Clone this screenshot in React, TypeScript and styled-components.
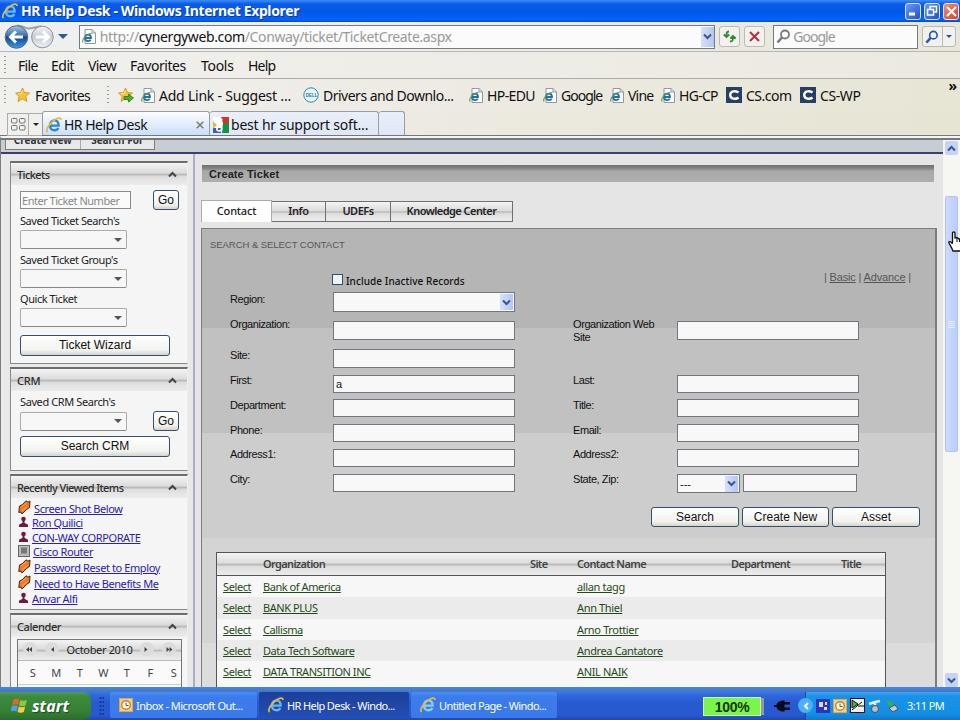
import React from 'react'
import styled, { createGlobalStyle, css } from 'styled-components'

const tahoma = `'Noto Sans', 'Open Sans', 'DejaVu Sans', sans-serif`
const arial = `'Liberation Sans', Arial, sans-serif`

const GlobalStyle = createGlobalStyle`
  * { box-sizing: border-box; }
  body { margin: 0; overflow: hidden; font-family: ${tahoma}; }
`

/* ---------- icons ---------- */

const IeLogo = ({ color = '#2a86cf' }: { color?: string }) => (
  <svg width="16" height="16" viewBox="0 0 16 16" fill="none">
    <path d="M4.6 8.6H12.6C12.8 5.4 10.9 3.4 8.5 3.4C5.9 3.4 4 5.5 4 8.4C4 11.2 5.8 13.2 8.5 13.2C10.3 13.2 11.6 12.4 12.3 10.9" stroke={color} strokeWidth="2.4" />
    <path d="M5.5 5.5C6.3 4.1 7.2 3.5 8.7 3.5" stroke="#7cc6f0" strokeWidth="1" />
    <path d="M1.6 15C-.8 13.2 3.3 6.1 8.6 2.9C11.7 .9 15.3 .2 15 3" stroke="#e9b83b" strokeWidth="1.7" />
  </svg>
)

const PageIcon = () => (
  <svg width="14" height="15" viewBox="0 0 14 15" fill="none">
    <path d="M3 .5H10L13.5 4V14.5H3Z" fill="#fdfdfd" stroke="#8f98a4" />
    <path d="M10 .5V4H13.5" stroke="#8f98a4" />
    <path d="M3.2 9H9C9 6.7 7.8 5.6 6.1 5.6C4.2 5.6 3.1 7 3.1 9C3.1 11 4.2 12.2 6.1 12.2C7.4 12.2 8.3 11.6 8.7 10.6" stroke="#23719f" strokeWidth="1.8" />
    <path d="M1 13.5C-.5 11 4 5 9.5 4.2" stroke="#5f9a58" strokeWidth="1.1" />
  </svg>
)

const Star = ({ add }: { add?: boolean }) => (
  <svg width="16" height="16" viewBox="0 0 16 16">
    <path d="M7.5 1L9.5 5.5L14.5 6L10.8 9.4L12 14.4L7.5 11.8L3 14.4L4.1 9.4L.6 6L5.5 5.5Z" fill="#fbc12e" stroke="#c98c1e" strokeWidth=".8" />
    <path d="M7.5 3L6.4 6.5L3 7" stroke="#ffe993" fill="none" />
    {add && <path d="M6 9.5H10.5V7L15.5 11L10.5 15V12.5H6Z" fill="#48b336" stroke="#267a1f" strokeWidth=".8" />}
  </svg>
)

const DellIcon = () => (
  <svg width="16" height="16" viewBox="0 0 16 16">
    <circle cx="8" cy="8" r="7.2" fill="#e9f4f9" stroke="#2d8db8" />
    <text x="2.7" y="10" fontFamily="Liberation Sans" fontSize="4.5" fontWeight="bold" fill="#16789f">DELL</text>
  </svg>
)

const CsIcon = () => (
  <svg width="16" height="16" viewBox="0 0 16 16">
    <rect width="16" height="16" fill="#263f69" />
    <path d="M12.5 5.5C10 3.4 4.2 3.8 4.2 8C4.2 12.2 10 12.6 12.5 10.5" fill="none" stroke="#fff" strokeWidth="2.4" />
  </svg>
)

const GoogleIcon = () => (
  <svg width="16" height="16" viewBox="0 0 16 16">
    <rect width="16" height="16" fill="#fff" />
    <path d="M8 0H16V6H10Z" fill="#d9322d" />
    <path d="M10 6H16V16H9Z" fill="#15923f" />
    <path d="M0 4L4 8L0 12Z" fill="#f0b92b" />
    <path d="M0 11H8V16H0Z" fill="#2f63c4" />
    <path d="M9.5 2.5H6C3.5 2.5 3.5 7 6 7.2C8.5 7.2 8 3.5 6.5 2.7M5.5 7.5L8 10C9.5 12 8.5 14 6 14C3.5 14 3 11.5 5 10.5" fill="none" stroke="#fff" strokeWidth="1.7" />
  </svg>
)

const Chevron = ({ up, color = '#3b5687' }: { up?: boolean; color?: string }) => (
  <svg width="9" height="7" viewBox="0 0 9 7">
    <path d={up ? 'M1 5.5L4.5 2L8 5.5' : 'M1 1.5L4.5 5L8 1.5'} fill="none" stroke={color} strokeWidth="2" />
  </svg>
)

const Caret = ({ color = '#222', size = 6 }: { color?: string; size?: number }) => (
  <svg width={size} height={size / 2} viewBox="0 0 6 3"><path d="M0 0H6L3 3Z" fill={color} /></svg>
)

const Magnifier = ({ color, size = 15 }: { color: string; size?: number }) => (
  <svg width={size} height={size} viewBox="0 0 15 15" fill="none" stroke={color}>
    <circle cx="9" cy="5.5" r="4" strokeWidth="1.8" />
    <path d="M6 8.5L1.5 13.5" strokeWidth="2.6" />
  </svg>
)

const NavButtons = () => (
  <svg width="50" height="28" viewBox="0 0 50 28">
    <defs>
      <linearGradient id="back" x2="0" y2="1">
        <stop stopColor="#a9c3df" /><stop offset=".45" stopColor="#3a6eb2" /><stop offset=".5" stopColor="#0d4799" /><stop offset="1" stopColor="#3d9ae6" />
      </linearGradient>
      <linearGradient id="fwd" x2="0" y2="1">
        <stop stopColor="#f3f5f6" /><stop offset=".5" stopColor="#c7ced4" /><stop offset="1" stopColor="#eef2f5" />
      </linearGradient>
    </defs>
    <path d="M13 2.5C19 2.5 21 5.5 25 5.5C29 5.5 31 3.5 38 3.5" fill="none" stroke="#9ea4aa" strokeWidth="2" />
    <circle cx="12.5" cy="14" r="11.3" fill="url(#back)" stroke="#56697f" />
    <path d="M19 14H7M12 8.5L6.5 14L12 19.5" stroke="#fff" strokeWidth="3" fill="none" />
    <circle cx="38.5" cy="14" r="10.8" fill="url(#fwd)" stroke="#8b9299" />
    <path d="M32 14H44M39 8.5L44.5 14L39 19.5" stroke="#fff" strokeWidth="3" fill="none" />
  </svg>
)

const RefreshIcon = () => (
  <svg width="15" height="13" viewBox="0 0 15 13" fill="none" stroke="#2f8a30" strokeWidth="1.8">
    <path d="M7 1.5C4.5 1.5 4.5 3 4.5 6.5M1.8 4.5L4.5 7L7.2 4.5" />
    <path d="M8 11.5C10.8 11.5 11 10 11 6.5M8.3 8.5L11 6L13.7 8.5" />
  </svg>
)

const CrossIcon = ({ color, size = 11 }: { color: string; size?: number }) => (
  <svg width={size} height={size} viewBox="0 0 11 11">
    <path d="M1 1L10 10M10 1L1 10" stroke={color} strokeWidth="2" />
  </svg>
)

const QuickTabsIcon = () => (
  <svg width="15" height="13" viewBox="0 0 15 13" fill="none" stroke="#74787d">
    <rect x=".5" y=".5" width="5.5" height="4.5" rx="1" /><rect x="8.5" y=".5" width="5.5" height="4.5" rx="1" />
    <rect x=".5" y="7.5" width="5.5" height="4.5" rx="1" /><rect x="8.5" y="7.5" width="5.5" height="4.5" rx="1" />
  </svg>
)

const TicketIcon = () => (
  <svg width="13" height="15" viewBox="0 0 13 15">
    <path d="M1.5 6L4.5 4.5L8 .8L10 2.2L12 1L11.5 7.5L8.5 9.5L4 14L3 12L.8 12.5Z" fill="#f07a26" stroke="#4b2415" strokeWidth="1" />
    <path d="M3 7L8.5 3M4 11L9.5 6.5" stroke="#ffa452" />
  </svg>
)

const PersonIcon = () => (
  <svg width="11" height="12" viewBox="0 0 11 12" fill="#6c1c3f">
    <circle cx="5.5" cy="3" r="2.3" /><path d="M4.500 5H6.500V6.800L10 8.800V11H1V8.800L4.500 6.800Z" />
  </svg>
)

const DeviceIcon = () => (
  <svg width="12" height="12" viewBox="0 0 12 12">
    <rect x=".5" y=".5" width="11" height="11" fill="#bbb" stroke="#666" /><rect x="3" y="2.5" width="6" height="6" fill="#777" />
  </svg>
)

const CalIcon = ({ next, double }: { next?: boolean; double?: boolean }) => (
  <svg width="8" height="7" viewBox="0 0 8 7" fill="#444">
    <path d={next ? 'M1.5 1L4.5 3.5L1.5 6Z' : 'M6 1L3 3.5L6 6Z'} />
    {double && <path d={next ? 'M4.5 1L7.5 3.5L4.5 6Z' : 'M3 1L0 3.5L3 6Z'} />}
  </svg>
)

const WindowsFlag = () => (
  <svg width="17" height="17" viewBox="0 0 17 17">
    <path d="M2.5 2.5C4.5 1.2 6.5 1.5 8.2 2.5L7 8C5 7 3 7 1 8Z" fill="#f0602c" />
    <path d="M9.2 3C11.3 4 13.5 4 16 3L14.5 8.5C12.5 9.5 10 9.4 8 8.5Z" fill="#8dc63f" />
    <path d="M.8 9C3 8 5 8 6.8 9L5.5 14.5C3.5 13.5 1.5 13.5 -.5 14.5Z" fill="#4ba3ee" />
    <path d="M7.8 9.5C9.8 10.5 12.2 10.5 14.2 9.5L12.8 15C10.8 16 8.5 16 6.5 15Z" fill="#fbcd38" />
  </svg>
)

const ClockIcon = () => (
  <svg width="14" height="14" viewBox="0 0 14 14">
    <rect x=".5" y=".5" width="13" height="13" fill="#f3cf84" stroke="#f0a23b" />
    <circle cx="7" cy="7" r="4.3" fill="#fff6de" stroke="#b88642" strokeWidth="1.4" />
    <path d="M7 4.5V7.5H9.5" fill="none" stroke="#6c563d" />
  </svg>
)

const PlugIcon = () => (
  <svg width="16" height="12" viewBox="0 0 16 12" fill="#080a18">
    <path d="M0 5H2.5C3 2 6 .5 10.5 .5V11.5C6 11.5 3 10 2.5 7H0Z" /><path d="M10 2H16V4.5H10ZM10 7.5H16V10H10Z" />
  </svg>
)

const HandCursor = () => (
  <svg width="13" height="21" viewBox="0 0 13 21">
    <path d="M4.5 12V2C4.5 .5 7 .5 7 2V7L9 6.5L11 8L13 8V20H5C4 17 2 14 1 12C0 10 3 10 4.5 13" fill="#fff" stroke="#111" strokeWidth="1.3" />
    <path d="M9 7V11M11.5 8V11" stroke="#111" />
  </svg>
)

/* ---------- browser chrome ---------- */

const Screen = styled.div`
  width: 960px;
  height: 720px;
  display: flex;
  flex-direction: column;
  overflow: hidden;
  background: #ece9e0;
  position: relative;
`

const Text = styled.span<{ $s?: number; $ls?: number }>`
  white-space: pre;
  font-size: ${p => p.$s || 11}px;
  letter-spacing: ${p => p.$ls || 0}px;
`

const TitleBar = styled.header`
  height: 22px;
  flex: none;
  display: flex;
  align-items: center;
  gap: 3px;
  padding: 0 1px 0 2px;
  color: #fff;
  font-weight: 700;
  background: linear-gradient(#3c8df8 0, #0c5be6 4px, #0356e8 12px, #0264fc 20px, #0747b5 22px);

  ${Text} {
    flex: 1;
    margin-top: -1px;
    text-shadow: 1px 1px #0b3a92;
  }
`

const WinButton = styled.i<{ $close?: boolean }>`
  width: 16px;
  height: 17px;
  border: 1px solid #dbe8ff;
  border-radius: 3px;
  display: flex;
  align-items: center;
  justify-content: center;
  background: ${p => p.$close ? 'linear-gradient(135deg, #f09070, #d9431d)' : 'linear-gradient(135deg, #6b9bf5, #1e50cc)'};
`

const NavBar = styled.div`
  height: 30px;
  flex: none;
  display: flex;
  align-items: center;
  padding-left: 4px;
  border-bottom: 1px solid #b8b8b3;
  background: linear-gradient(90deg, #eff0f0, #ecebe5 60%, #e7e6d8);
`

const AddressBox = styled.div`
  width: 638px;
  height: 24px;
  margin: 0 4px 0 11px;
  padding-left: 2px;
  display: flex;
  align-items: center;
  gap: 4px;
  border: 1px solid #777b80;
  background: #fbfbfb;
  color: #999;

  b { font-weight: 400; color: #111; }
`

const DropButton = styled.span`
  width: 13px;
  height: 20px;
  margin-left: auto;
  display: flex;
  align-items: center;
  justify-content: center;
  background: linear-gradient(90deg, #d6e0fa, #b4c7f1);
`

const ToolButton = styled.span<{ $w?: number }>`
  width: ${p => p.$w || 21}px;
  height: 21px;
  margin-right: 4px;
  display: flex;
  flex: none;
  align-items: center;
  justify-content: center;
  gap: 3px;
  border: 1px solid #b9babb;
  border-radius: 3px;
  background: #f2f1ed;

  svg { flex: none; }
`

const Divider = styled.i`
  width: 1px;
  height: 19px;
  background: #b9babb;
`

const SearchBox = styled.div`
  width: 145px;
  height: 24px;
  margin: 0 4px;
  padding-left: 2px;
  display: flex;
  align-items: center;
  gap: 2px;
  border: 1px solid #777b80;
  background: #fbfbfb;
  color: #999;
`

const MenuBar = styled.nav`
  height: 27px;
  flex: none;
  display: flex;
  align-items: center;
  padding-left: 4px;
  border-bottom: 1px solid #acaca8;
  background: linear-gradient(90deg, #f0f0ed, #ece9e0);
`

const Grip = styled.i<{ $gap?: number }>`
  width: 2px;
  height: 18px;
  flex: none;
  margin-right: ${p => p.$gap || 0}px;
  background: repeating-linear-gradient(#99a 0 1px, transparent 1px 4px);
`

const MenuItem = styled(Text)<{ $w: number }>`
  width: ${p => p.$w}px;
  color: #111;
`

const FavBar = styled.div`
  height: 32px;
  flex: none;
  display: flex;
  align-items: center;
  padding-left: 4px;
  position: relative;
  color: #111;
  background: linear-gradient(90deg, #f0f0ed, #ece9e0 60%, #e7e5d4);
`

const Fav = styled.span<{ $w: number }>`
  width: ${p => p.$w}px;
  flex: none;
  display: flex;
  align-items: center;
  gap: 4px;

  svg { flex: none; }
`

const More = styled.b`
  position: absolute;
  right: 3px;
  top: -3px;
  font-size: 14px;
`

const TabBar = styled.div`
  height: 25px;
  flex: none;
  display: flex;
  padding-left: 7px;
  background: linear-gradient(90deg, #f0f0ed, #ece9e0 50%, #e6e4d3);
  border-bottom: 1px solid #77777a;
`

const BrowserTab = styled.div<{ $w: number; $active?: boolean }>`
  width: ${p => p.$w}px;
  display: flex;
  align-items: center;
  gap: 2px;
  padding: 2px 5px 0 3px;
  border: 1px solid #9b9da2;
  border-bottom: 0;
  border-left-width: ${p => p.$active ? 1 : 0}px;
  border-radius: 3px 3px 0 0;
  color: #111;
  background: ${p => p.$active ? 'linear-gradient(#fdfdff, #c9dffa)' : 'linear-gradient(#e9f0fb, #dfe7f6)'};

  > svg:nth-child(n + 3) { margin-left: auto; }
`

const QuickTab = styled.div<{ $w: number }>`
  width: ${p => p.$w}px;
  height: 23px;
  margin-top: 2px;
  display: flex;
  align-items: center;
  justify-content: center;
  border: 1px solid #acadaf;
  border-right: 0;
`

/* ---------- page ---------- */

const Viewport = styled.div`
  height: 551px;
  flex: none;
  display: flex;
  border-top: 2px solid #f5f5f5;
  box-shadow: inset 0 2px #77777c;
  border-left: 1px solid #807d7d;
  padding-top: 2px;
`

const Page = styled.div`
  flex: 1;
  display: flex;
  flex-direction: column;
  min-width: 0;
`

const TopStrip = styled.div`
  height: 14px;
  flex: none;
  overflow: hidden;
  padding-left: 4px;
  background: #c8ccd3;
  border-bottom: 2px solid #39406f;
`

const CutButtons = styled.div`
  width: 150px;
  height: 10px;
  overflow: hidden;
  display: flex;
  border: 1px solid #7b7b80;
  border-top: 0;
  background: #e8e8e8;
  font-weight: 700;
  color: #333;
  line-height: 1;

  span {
    flex: 1;
    margin-top: -5px;
    text-align: center;
  }

  span + span { border-left: 1px solid #aaa; }
`

const Columns = styled.div`
  flex: 1;
  display: flex;
  min-height: 0;
  overflow: hidden;
`

const Sidebar = styled.aside`
  width: 194px;
  flex: none;
  padding: 7px 5px 0 9px;
  border-right: 2px solid #a4b1c6;
  background: #e8e8e9;
  display: flex;
  flex-direction: column;
  gap: 3px;
`

const Box = styled.section<{ $h: number }>`
  height: ${p => p.$h}px;
  flex: none;
  overflow: hidden;
  border: 1px solid #898989;
  border-right-color: #eee;
  border-top: 2px solid #6d6d6d;
  background: #f5f5f5;
`

const metal = css`
  background: linear-gradient(#f4f4f4 0, #dcdcdc 45%, #b9b9b9 52%, #dedede 62%, #ececec 100%);
`

const BoxHead = styled.h3`
  height: 22px;
  margin: 0;
  padding: 0 10px 0 6px;
  display: flex;
  align-items: center;
  justify-content: space-between;
  color: #2c2c2c;
  font-weight: 500;
  ${metal}
`

const BoxBody = styled.div<{ $top: number }>`
  padding: ${p => p.$top}px 0 0 9px;
  display: flex;
  flex-direction: column;
  align-items: flex-start;
  color: #222;
`

const Line = styled.div`
  width: 159px;
  display: flex;
  align-items: center;
  justify-content: space-between;
`

const SideInput = styled.div`
  width: 111px;
  height: 18px;
  padding-left: 1px;
  display: flex;
  align-items: center;
  border: 1px solid #8a8a8a;
  background: #fafafa;
  color: #888;
`

const FieldLabel = styled.label`
  height: 20px;
  line-height: 19px;
`

const SideSelect = styled.div`
  width: 107px;
  height: 19px;
  padding-right: 4px;
  display: flex;
  align-items: center;
  justify-content: flex-end;
  border: 1px solid #aaa;
  border-bottom-color: #888;
  border-radius: 2px;
  background: #f7f7f7;
`

const Button = styled.button<{ $w: number; $h?: number }>`
  width: ${p => p.$w}px;
  height: ${p => p.$h || 20}px;
  flex: none;
  padding: 0 0 1px;
  border: 1px solid #34506b;
  border-radius: 3px;
  background: linear-gradient(#fff, #f2f2ee 75%, #d5d3cd);
  font: 12px/1 ${arial};
  color: #111;
`

const WideButton = styled(Button)<{ $gap: number }>`
  margin-top: ${p => p.$gap}px;
`

const Recent = styled.a<{ $h: number }>`
  height: ${p => p.$h}px;
  margin-left: -2px;
  display: flex;
  align-items: center;
  gap: 3px;
  color: #2b20b5;
  white-space: nowrap;

  span { margin-top: -2px; text-decoration: underline; }
  svg { flex: none; margin-top: -3px; }
`

const Calendar = styled.div`
  width: 165px;
  height: 60px;
  margin: 2px 0 0 6px;
  border: 1px solid #777;
  background: #fafafa;
`

const CalHead = styled.div`
  height: 21px;
  padding: 0 5px 2px;
  display: flex;
  align-items: center;
  justify-content: space-between;
  border-bottom: 1px solid #bbb;
  color: #222;
  ${metal}
`

const CalDays = styled.div`
  display: grid;
  grid-template-columns: repeat(7, 23.5px);
  height: 24px;
  padding-left: 3px;
  align-items: center;
  text-align: center;
  color: #444;
  border-bottom: 1px solid #ccc;
`

const CalArrow = styled.i`
  width: 14px;
  height: 14px;
  border-radius: 50%;
  background: #dcdcdc;
  display: flex;
  align-items: center;
  justify-content: center;
`

const Main = styled.main`
  flex: 1;
  min-width: 0;
  padding: 11px 7px 0 6px;
  background: #e5e5e5;
`

const SectionBar = styled.h2`
  width: 732px;
  height: 17px;
  margin: 0 0 18px 1px;
  padding-left: 7px;
  line-height: 19px;
  font-family: ${arial};
  color: #222;
  background: linear-gradient(#6f6f6f 0, #8a8a8a 4px, #a9a9a9 6px, #aeaeae);
  display: flex;
`

const Tabs = styled.div`
  height: 22px;
  display: flex;
  align-items: flex-end;
`

const Tab = styled.div<{ $w: number; $on?: boolean }>`
  width: ${p => p.$w}px;
  height: ${p => p.$on ? 22 : 21}px;
  padding-bottom: 2px;
  display: flex;
  align-items: center;
  justify-content: center;
  border: 1px solid ${p => p.$on ? '#aaa' : '#707070'};
  border-left-width: ${p => p.$on ? 1 : 0}px;
  font-weight: ${p => p.$on ? 500 : 600};
  color: #222;
  ${metal}
  ${p => p.$on && 'background: #fdfdfd; border-bottom: 0;'}
`

const Panel = styled.div`
  width: 736px;
  height: 475px;
  margin-top: 6px;
  padding: 9px 0 0 8px;
  border: 1px solid #7d7d7d;
  border-right-width: 2px;
  background: linear-gradient(#b5b5b5 99px, #c1c1c1 99px 204px, #cdcdcd 204px 309px, #d4d4d4 309px 414px, #dcdcdc 414px);
  font-family: ${arial};
  color: #111;
`

const PanelTitle = styled.h4`
  height: 14px;
  margin: 0;
  line-height: 14px;
  font-weight: 400;
  color: #555;
  display: flex;
`

const ViewLinks = styled.div`
  height: 14px;
  margin: 19px 24px 0 0;
  display: flex;
  justify-content: flex-end;
  color: #555;
`

const CheckRow = styled.label`
  height: 14px;
  margin: -11px 0 4px 122px;
  display: flex;
  align-items: center;
  gap: 3px;
  width: 150px;
  font-family: ${tahoma};
  font-weight: 500;
`

const CheckBox = styled.i`
  width: 11px;
  height: 11px;
  margin-top: -3px;
  border: 1px solid #2f4f6f;
  background: #eef3f4;
`

const FormRow = styled.div<{ $h: number }>`
  height: ${p => p.$h}px;
  padding-left: 20px;
  display: grid;
  grid-template-columns: 103px 240px 104px 1fr;
  align-items: start;
`

const Caption = styled.label<{ $up?: number }>`
  margin-top: ${p => -(p.$up || 0)}px;
  line-height: 13px;
  font-size: 11px;
  letter-spacing: -.42px;
`

const Input = styled.div<{ $w?: number; $h?: number }>`
  width: ${p => p.$w || 182}px;
  height: ${p => p.$h || 18}px;
  padding: 1px 1px 1px 2px;
  display: flex;
  align-items: center;
  border: 1px solid #717780;
  background: #f8f8f8;
  font-size: 11px;
`

const Pair = styled.div`
  display: flex;
  gap: 3px;
`

const MiniDrop = styled(DropButton)`
  width: 13px;
  height: 16px;
`

const Actions = styled.div`
  height: 20px;
  margin: 7px 15px 0 0;
  display: flex;
  justify-content: flex-end;
  gap: 3px;
`

const Results = styled.div`
  width: 670px;
  height: 150px;
  margin: 25px 0 0 6px;
  border: 1px solid #555;
  border-bottom: 0;
  overflow: hidden;
  background: #f7f7f7;
  font-family: ${tahoma};
`

const resultGrid = css`
  display: grid;
  grid-template-columns: 40px 267px 47px 154px 110px 1fr;
  align-items: center;
  padding-left: 6px;
`

const ResultHead = styled.div`
  height: 23px;
  border-bottom: 1px solid #555;
  font-weight: 600;
  color: #444;
  ${resultGrid}
  padding-bottom: 1px;
  ${metal}
`

const ResultRow = styled.div`
  height: 21.3px;
  color: #1f4a17;
  ${resultGrid}

  &:nth-child(odd) { background: #ebebeb; }
  ${Text} { justify-self: start; text-decoration: underline; }
`

const ScrollTrack = styled.div`
  width: 17px;
  flex: none;
  padding: 1px 2px 0 1px;
  display: flex;
  flex-direction: column;
  align-items: center;
  background: #f6f6f3;
`

const ScrollButton = styled.i`
  width: 13px;
  height: 14px;
  border-radius: 2px;
  background: #c4d3f8;
  display: flex;
  align-items: center;
  justify-content: center;
`

const Thumb = styled.i`
  width: 13px;
  height: 256px;
  margin: 41px 0 auto;
  border: 1px solid #b0c5f3;
  border-radius: 2px;
  background: linear-gradient(90deg, #ccdafc, #bacdfa);
  display: flex;
  align-items: center;
  justify-content: center;

  &::after {
    content: '';
    width: 7px;
    height: 7px;
    background: repeating-linear-gradient(#e8f0ff 0 1px, transparent 1px 2px);
  }
`

const Pointer = styled.div`
  position: absolute;
  left: 948px;
  top: 231px;
`

/* ---------- taskbar ---------- */

const TaskBar = styled.footer`
  height: 33px;
  flex: none;
  display: flex;
  padding-top: 5px;
  color: #fff;
  background: linear-gradient(#4b87d0 0, #3b77d8 5px, #3068df 8px, #2759cf 16px, #2759d2 28px, #1f48ad);
`

const Start = styled.div`
  width: 91px;
  padding: 0 0 1px 11px;
  display: flex;
  align-items: center;
  gap: 4px;
  border-radius: 0 8px 8px 0;
  background: linear-gradient(#5a9a55 0, #3d8c3d 4px, #348034 20px, #2a6b2c);
  font-style: italic;
  font-weight: 700;
  text-shadow: 1px 1px 1px #1b4b1c;
`

const TaskGrip = styled.i`
  width: 5px;
  height: 20px;
  margin: 4px 6px 0 8px;
  background: radial-gradient(circle, #17398f 1px, transparent 1.2px) 0 0 / 3px 4px;
`

const Task = styled.div<{ $w: number; $on?: boolean }>`
  width: ${p => p.$w}px;
  height: 26px;
  margin: 0 2px 0 0;
  padding-left: 9px;
  display: flex;
  align-items: center;
  gap: 3px;
  border-radius: 2px;
  background: ${p => p.$on ? 'linear-gradient(#1d3f99, #234fb4)' : 'linear-gradient(#4f8df2, #3b7cec 5px, #3a79e8)'};
`

const Battery = styled.div`
  width: 58px;
  height: 19px;
  margin: 5px 13px 0 auto;
  display: flex;
  align-items: center;
  justify-content: center;
  border: 1px solid #c9f2b5;
  background: #7cf54a;
  color: #12360c;
  font-family: ${arial};
  font-weight: 700;
  box-shadow: 4px 0 0 -1px #909aa5;
`

const PlugSlot = styled.span`
  padding-top: 8px;

  svg { display: block; }
`

const Tray = styled.div`
  width: 155px;
  height: 28px;
  margin-left: 15px;
  padding-bottom: 1px;
  display: flex;
  align-items: center;
  gap: 3px;
  border-left: 1px solid #1349a0;
  background: linear-gradient(#4da1e4 0, #1794ea 4px, #138ee3 22px, #1177c6);
`

const TrayArrow = styled.i`
  width: 15px;
  height: 15px;
  margin-left: -8px;
  border-radius: 50%;
  background: #4bb0f2;
  display: flex;
  align-items: center;
  justify-content: center;
`

const Clock = styled(Text)`
  margin-left: 5px;
`

const menus = [
  { w: 33, text: 'File', ls: -.7 },
  { w: 37, text: 'Edit', ls: -.5 },
  { w: 42, text: 'View', ls: -.6 },
  { w: 71, text: 'Favorites', ls: -.45 },
  { w: 47, text: 'Tools', ls: -.3 },
  { w: 40, text: 'Help', ls: -.8 },
]

const bookmarks = [
  { w: 162, icon: <PageIcon />, text: 'Add Link - Suggest ...', ls: -.22 },
  { w: 166, icon: <DellIcon />, text: 'Drivers and Downlo...', ls: -.5 },
  { w: 74, icon: <PageIcon />, text: 'HP-EDU', ls: -.6 },
  { w: 67, icon: <PageIcon />, text: 'Google', ls: -1 },
  { w: 51, icon: <PageIcon />, text: 'Vine', ls: -.8 },
  { w: 65, icon: <PageIcon />, text: 'HG-CP', ls: -.7 },
  { w: 74, icon: <CsIcon />, text: 'CS.com', ls: -.5 },
  { w: 70, icon: <CsIcon />, text: 'CS-WP', ls: -.4 },
]

const recents = [
  { h: 14, icon: <TicketIcon />, text: 'Screen Shot Below' },
  { h: 15, icon: <PersonIcon />, text: 'Ron Quilici' },
  { h: 14, icon: <PersonIcon />, text: 'CON-WAY CORPORATE' },
  { h: 15, icon: <DeviceIcon />, text: 'Cisco Router' },
  { h: 16, icon: <TicketIcon />, text: 'Password Reset to Employ' },
  { h: 16, icon: <TicketIcon />, text: 'Need to Have Benefits Me' },
  { h: 15, icon: <PersonIcon />, text: 'Anvar Alfi' },
]

const fields = [
  { h: 26, left: 'Site:', ih: 19, up: 0 },
  { h: 24, left: 'First:', right: 'Last:', value: 'a', up: 1 },
  { h: 25, left: 'Department:', right: 'Title:', up: 0 },
  { h: 25, left: 'Phone:', right: 'Email:', up: 0 },
  { h: 25, left: 'Address1:', right: 'Address2:', up: 1 },
]

const contacts = [
  ['Bank of America', 'allan tagg'],
  ['BANK PLUS', 'Ann Thiel'],
  ['Callisma', 'Arno Trottier'],
  ['Data Tech Software', 'Andrea Cantatore'],
  ['DATA TRANSITION INC', 'ANIL NAIK'],
]

const SidebarBox = ({ title, h, ls = -.2, children }: { title: string; h: number; ls?: number; children: React.ReactNode }) => (
  <Box $h={h}>
    <BoxHead><Text $ls={ls}>{title}</Text><Chevron up color="#444" /></BoxHead>
    {children}
  </Box>
)

const Chrome = () => (
  <>
    <TitleBar>
      <IeLogo color="#6bb8f5" />
      <Text $s={14} $ls={-.37}>HR Help Desk - Windows Internet Explorer</Text>
      <WinButton><svg width="10" height="10"><path d="M1 8H7" stroke="#fff" strokeWidth="3" /></svg></WinButton>
      <WinButton>
        <svg width="12" height="12" fill="none" stroke="#fff" strokeWidth="1.5"><path d="M4 4V1.5H10.5V7H8" /><rect x="1.5" y="4.5" width="6" height="5.5" /></svg>
      </WinButton>
      <WinButton $close><CrossIcon color="#fff" /></WinButton>
    </TitleBar>
    <NavBar>
      <NavButtons />
      <svg width="14" height="6"><path d="M4 0H14L9 5Z" fill="#275d94" /></svg>
      <AddressBox>
        <PageIcon />
        <Text $s={14} $ls={-.38}>http://<b>cynergyweb.com</b>/Conway/ticket/TicketCreate.aspx</Text>
        <DropButton><Chevron /></DropButton>
      </AddressBox>
      <ToolButton><RefreshIcon /></ToolButton>
      <ToolButton><CrossIcon color="#b3333b" /></ToolButton>
      <SearchBox><Magnifier color="#777" /><Text $s={14} $ls={-1}>Google</Text></SearchBox>
      <ToolButton $w={34}><Magnifier color="#2458ba" size={14} /><Divider /><Caret color="#24519a" /></ToolButton>
    </NavBar>
    <MenuBar>
      <Grip $gap={12} />
      {menus.map(m => <MenuItem key={m.text} $s={14} $ls={m.ls} $w={m.w}>{m.text}</MenuItem>)}
    </MenuBar>
    <FavBar>
      <Grip $gap={9} />
      <Fav $w={92}><Star /><Text $s={14} $ls={-.5}>Favorites</Text></Fav>
      <Grip $gap={9} />
      <Fav $w={23}><Star add /></Fav>
      {bookmarks.map(b => <Fav key={b.text} $w={b.w}>{b.icon}<Text $s={14} $ls={b.ls}>{b.text}</Text></Fav>)}
      <More>»</More>
    </FavBar>
    <TabBar>
      <QuickTab $w={21}><QuickTabsIcon /></QuickTab>
      <QuickTab $w={14}><Caret /></QuickTab>
      <BrowserTab $w={168} $active><IeLogo /><Text $s={14} $ls={-.5}>HR Help Desk</Text><CrossIcon color="#777" size={8} /></BrowserTab>
      <BrowserTab $w={169}><GoogleIcon /><Text $s={14} $ls={-.2}>best hr support soft...</Text></BrowserTab>
      <BrowserTab $w={26} />
    </TabBar>
  </>
)

const Side = () => (
  <Sidebar>
    <SidebarBox title="Tickets" h={203} ls={-.6}>
      <BoxBody $top={5}>
        <Line>
          <SideInput><Text $ls={-.48}>Enter Ticket Number</Text></SideInput>
          <Button $w={26}>Go</Button>
        </Line>
        {["Saved Ticket Search's", "Saved Ticket Group's", 'Quick Ticket'].map(t => (
          <React.Fragment key={t}>
            <FieldLabel><Text $ls={-.45}>{t}</Text></FieldLabel>
            <SideSelect><Caret color="#555" size={8} /></SideSelect>
          </React.Fragment>
        ))}
        <WideButton $w={150} $h={21} $gap={8}>Ticket Wizard</WideButton>
      </BoxBody>
    </SidebarBox>
    <SidebarBox title="CRM" h={104}>
      <BoxBody $top={0}>
        <FieldLabel><Text $ls={-.4}>Saved CRM Search's</Text></FieldLabel>
        <Line><SideSelect><Caret color="#555" size={8} /></SideSelect><Button $w={26}>Go</Button></Line>
        <WideButton $w={150} $h={21} $gap={5}>Search CRM</WideButton>
      </BoxBody>
    </SidebarBox>
    <SidebarBox title="Recently Viewed Items" h={136} ls={-.58}>
      <BoxBody $top={4}>
        {recents.map(r => <Recent key={r.text} $h={r.h}>{r.icon}<Text $ls={-.4}>{r.text}</Text></Recent>)}
      </BoxBody>
    </SidebarBox>
    <SidebarBox title="Calender" h={90} ls={-.4}>
      <Calendar>
        <CalHead>
          <CalArrow><CalIcon double /></CalArrow>
          <CalArrow><CalIcon /></CalArrow>
          <Text $ls={-.35}>October 2010</Text>
          <CalArrow><CalIcon next /></CalArrow>
          <CalArrow><CalIcon next double /></CalArrow>
        </CalHead>
        <CalDays>{'SMTWTFS'.split('').map((d, i) => <Text key={i}>{d}</Text>)}</CalDays>
      </Calendar>
    </SidebarBox>
  </Sidebar>
)

const ContactForm = () => (
  <>
    <PanelTitle><Text $s={9.5} $ls={-.05}>SEARCH & SELECT CONTACT</Text></PanelTitle>
    <ViewLinks><Text $s={11} $ls={-.15}>| <u>Basic</u> | <u>Advance</u> |</Text></ViewLinks>
    <CheckRow><CheckBox /><Text $s={10} $ls={.07}>Include Inactive Records</Text></CheckRow>
    <FormRow $h={29}>
      <Caption $up={-1}>Region:</Caption>
      <Input $h={20}><MiniDrop><Chevron /></MiniDrop></Input>
    </FormRow>
    <FormRow $h={28}>
      <Caption $up={3}>Organization:</Caption>
      <Input $h={19} />
      <Caption $up={3}>Organization Web<br />Site</Caption>
      <Input $h={19} />
    </FormRow>
    {fields.map(f => (
      <FormRow key={f.left} $h={f.h}>
        <Caption $up={f.up}>{f.left}</Caption>
        <Input $h={f.ih}>{f.value}</Input>
        {f.right && <><Caption $up={f.up}>{f.right}</Caption><Input /></>}
      </FormRow>
    ))}
    <FormRow $h={26}>
      <Caption $up={1}>City:</Caption>
      <Input />
      <Caption $up={1}>State, Zip:</Caption>
      <Pair><Input $w={63} $h={19}>---<MiniDrop><Chevron /></MiniDrop></Input><Input $w={114} /></Pair>
    </FormRow>
    <Actions>
      <Button $w={88}>Search</Button>
      <Button $w={87}>Create New</Button>
      <Button $w={88}>Asset</Button>
    </Actions>
  </>
)

const App = () => (
  <Screen>
    <GlobalStyle />
    <Chrome />
    <Viewport>
      <Page>
        <TopStrip>
          <CutButtons><Text $s={10}>Create New</Text><Text $s={10}>Search For</Text></CutButtons>
        </TopStrip>
        <Columns>
          <Side />
          <Main>
            <SectionBar><Text $ls={.1}>Create Ticket</Text></SectionBar>
            <Tabs>
              <Tab $w={71} $on><Text $ls={-.2}>Contact</Text></Tab>
              <Tab $w={54}><Text $ls={-.4}>Info</Text></Tab>
              <Tab $w={65}><Text $ls={-.5}>UDEFs</Text></Tab>
              <Tab $w={122}><Text $ls={-.55}>Knowledge Center</Text></Tab>
            </Tabs>
            <Panel>
              <ContactForm />
              <Results>
                <ResultHead>
                  {['', 'Organization', 'Site', 'Contact Name', 'Department', 'Title'].map((c, i) => <Text key={i} $ls={-.65}>{c}</Text>)}
                </ResultHead>
                {contacts.map(([org, name]) => (
                  <ResultRow key={org}>
                    <Text $ls={-.4}>Select</Text><Text $ls={-.45}>{org}</Text><span /><Text $ls={-.35}>{name}</Text>
                  </ResultRow>
                ))}
              </Results>
            </Panel>
          </Main>
        </Columns>
      </Page>
      <ScrollTrack>
        <ScrollButton><Chevron up /></ScrollButton>
        <Thumb />
        <ScrollButton><Chevron /></ScrollButton>
      </ScrollTrack>
    </Viewport>
    <TaskBar>
      <Start><WindowsFlag /><Text $s={16}>start</Text></Start>
      <TaskGrip />
      <Task $w={147}><ClockIcon /><Text $ls={-.5}>Inbox - Microsoft Out...</Text></Task>
      <Task $w={150} $on><IeLogo color="#62b4f3" /><Text $ls={-.6}>HR Help Desk - Windo...</Text></Task>
      <Task $w={146}><IeLogo color="#8ccfff" /><Text $ls={-.6}>Untitled Page - Windo...</Text></Task>
      <Battery><Text $s={14} $ls={-.3}>100%</Text></Battery>
      <PlugSlot><PlugIcon /></PlugSlot>
      <Tray>
        <TrayArrow><svg width="6" height="8"><path d="M5 1L2 4L5 7" stroke="#fff" strokeWidth="2" fill="none" /></svg></TrayArrow>
        <svg width="14" height="14"><rect width="14" height="14" fill="#2834c9" /><path d="M3 3H7V8H3ZM9 3H11V6H9ZM8 8H11V11H8Z" fill="#dce0ff" /></svg>
        <ClockIcon />
        <svg width="15" height="15"><rect x=".5" y=".5" width="14" height="14" fill="#eee" stroke="#111" /><path d="M2 2L8 6L2 10ZM8 8H14M2 12L12 4" fill="#47b33e" stroke="#111" /></svg>
        <svg width="14" height="14"><path d="M1 5L7 3L12 2M7 4V9" stroke="#d6f1ff" strokeWidth="2.5" fill="none" /><circle cx="7" cy="10" r="3.5" fill="#b8c4ca" stroke="#43525c" /></svg>
        <svg width="14" height="14"><path d="M1 1L7 3L9 8L5 9Z" fill="#3caf48" /><path d="M4 9L10 6L13 10L8 13Z" fill="#c7ccd0" stroke="#4a565c" /></svg>
        <Clock $s={11} $ls={-.6}>3:11 PM</Clock>
      </Tray>
    </TaskBar>
    <Pointer><HandCursor /></Pointer>
  </Screen>
)

export default App
